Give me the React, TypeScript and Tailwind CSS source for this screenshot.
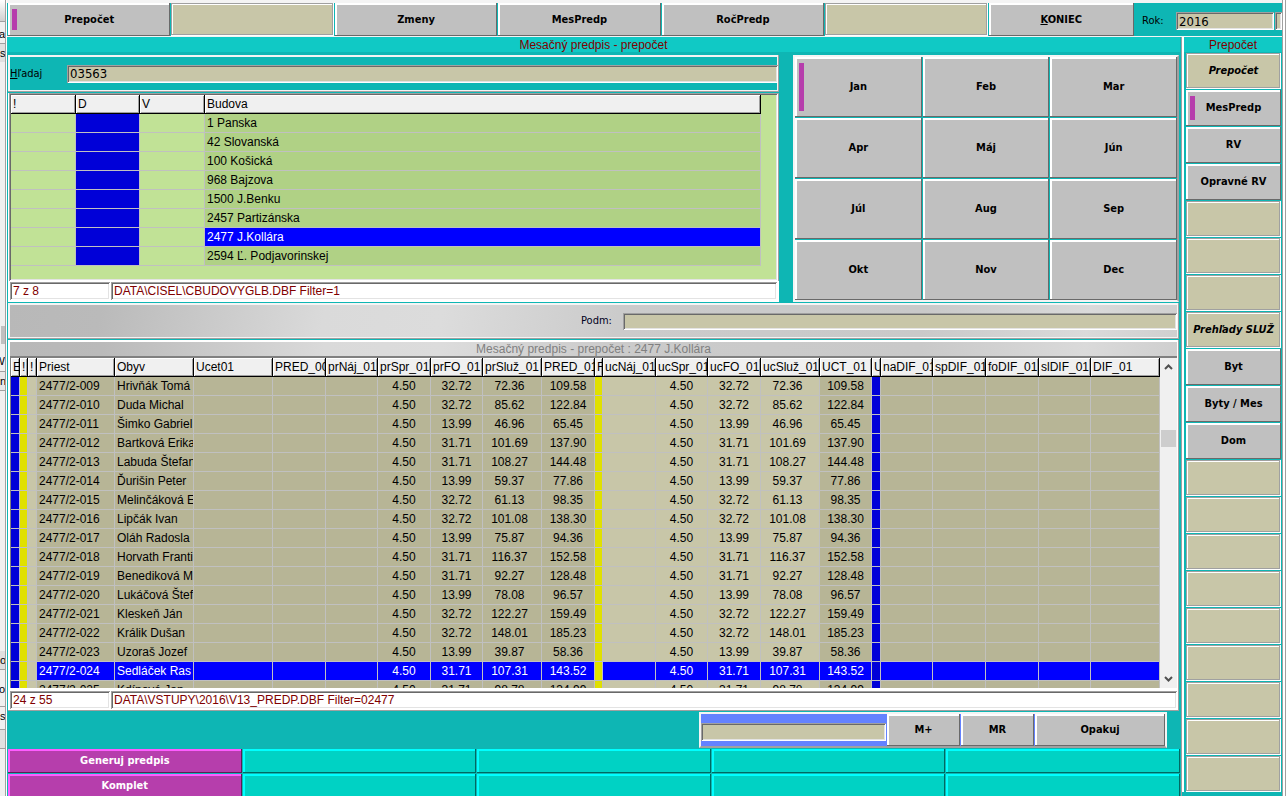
import React from "react";

const UI = "font-['DejaVu_Sans_Condensed','DejaVu_Sans',sans-serif]";
const RAISED = "bg-[#c0c0c0] shadow-[inset_-1px_-1px_0_#696969,inset_2px_2px_0_#fff]";
const ETCHED =
  "bg-[#c8c6a8] shadow-[inset_-1px_-1px_0_#fff,inset_-2px_-2px_0_#a0a0a0,inset_1px_1px_0_#a0a0a0,inset_2px_2px_0_#fff]";
const SUNKEN =
  "shadow-[inset_1px_1px_0_#a0a0a0,inset_-1px_-1px_0_#fff,inset_2px_2px_0_#696969,inset_-2px_-2px_0_#e3e3e3]";
const PANEL = "shadow-[inset_-1px_-1px_0_#a0a0a0,inset_2px_2px_0_#f4f4f4,inset_-2px_-2px_0_#f4f4f4]";
const SILVER =
  "bg-[linear-gradient(100deg,#b8b8b8_0%,#bababa_8%,#dadada_27%,#dcdcdc_37%,#cbcbcb_52%,#c9c9c9_78%,#dadada_92%,#cfcfcf_100%)]";

type ButtonProps = { label?: React.ReactNode; marked?: boolean; italic?: boolean; className?: string };

function Key({ label, marked, italic, className = "" }: ButtonProps) {
  const flat = !label || italic;
  return (
    <button
      type="button"
      disabled={flat}
      className={`relative min-w-0 text-center text-[11px] leading-4 font-bold whitespace-nowrap text-black ${UI} ${flat ? ETCHED : RAISED} ${italic ? "italic" : ""} ${className}`}
    >
      {marked && <span className="absolute top-[6px] bottom-[6px] left-[4px] w-[5px] bg-[#b63eac]" />}
      {label}
    </button>
  );
}

function Status({ position, source, className }: { position: string; source: string; className: string }) {
  return (
    <div className={`flex gap-px bg-white text-[12px] leading-[18px] text-[#800000] ${className}`}>
      <div className={`h-[18px] w-[100px] shrink-0 bg-white pl-[3px] ${SUNKEN}`}>{position}</div>
      <div className={`h-[18px] flex-1 bg-white pl-[3px] ${SUNKEN}`}>{source}</div>
    </div>
  );
}

const TH =
  "h-[19px] overflow-hidden border-r border-b border-black bg-[#f0f0f0] p-0 pl-[2px] text-left text-[12px] leading-[17px] font-normal whitespace-nowrap shadow-[inset_1px_1px_0_#fff,inset_-1px_-1px_0_#a0a0a0]";
const TD = "h-[19px] overflow-hidden border-r border-b border-[#c0c0c0] p-0 leading-[18px] whitespace-nowrap";

const buildings = [
  "1 Panska",
  "42 Slovanská",
  "100 Košická",
  "968 Bajzova",
  "1500 J.Benku",
  "2457 Partizánska",
  "2477 J.Kollára",
  "2594 Ľ. Podjavorinskej",
];

type Kind = "blue" | "yellow" | "light" | "dark";
type Column = { head: string; width: string; kind: Kind; field?: number; align?: string };

const columns: Column[] = [
  { head: "E", width: "w-[9px]", kind: "blue" },
  { head: "!", width: "w-[8px]", kind: "yellow" },
  { head: "!", width: "w-[9px]", kind: "light" },
  { head: "Priest", width: "w-[78px]", kind: "dark", field: 0, align: "pl-[2px]" },
  { head: "Obyv", width: "w-[79px]", kind: "dark", field: 1, align: "pl-[2px]" },
  { head: "Ucet01", width: "w-[79px]", kind: "dark" },
  { head: "PRED_00", width: "w-[53px]", kind: "dark" },
  { head: "prNáj_01", width: "w-[52px]", kind: "dark" },
  { head: "prSpr_01", width: "w-[53px]", kind: "dark", field: 2, align: "text-center" },
  { head: "prFO_01", width: "w-[52px]", kind: "dark", field: 3, align: "text-center" },
  { head: "prSluž_01", width: "w-[59px]", kind: "dark", field: 4, align: "text-center pr-[5px]" },
  { head: "PRED_01", width: "w-[53px]", kind: "dark", field: 5, align: "text-center" },
  { head: "F", width: "w-[8px]", kind: "yellow" },
  { head: "ucNáj_01", width: "w-[53px]", kind: "light" },
  { head: "ucSpr_01", width: "w-[52px]", kind: "light", field: 2, align: "text-center" },
  { head: "ucFO_01", width: "w-[53px]", kind: "light", field: 3, align: "text-center" },
  { head: "ucSluž_01", width: "w-[59px]", kind: "light", field: 4, align: "text-center pr-[5px]" },
  { head: "UCT_01", width: "w-[52px]", kind: "dark", field: 5, align: "text-center" },
  { head: "U", width: "w-[9px]", kind: "blue" },
  { head: "naDIF_01", width: "w-[52px]", kind: "dark" },
  { head: "spDIF_01", width: "w-[53px]", kind: "dark" },
  { head: "foDIF_01", width: "w-[53px]", kind: "dark" },
  { head: "slDIF_01", width: "w-[52px]", kind: "dark" },
  { head: "DIF_01", width: "", kind: "dark" },
];

const fills: Record<Kind, string> = {
  blue: "bg-[#0000d8]",
  yellow: "bg-[#e0e000]",
  light: "bg-[#c8c6a8]",
  dark: "bg-[#b7b596]",
};

const rows: string[][] = [
  ["2477/2-009", "Hrivňák Tomá", "4.50", "32.72", "72.36", "109.58"],
  ["2477/2-010", "Duda Michal", "4.50", "32.72", "85.62", "122.84"],
  ["2477/2-011", "Šimko Gabriel", "4.50", "13.99", "46.96", "65.45"],
  ["2477/2-012", "Bartková Erika", "4.50", "31.71", "101.69", "137.90"],
  ["2477/2-013", "Labuda Štefan", "4.50", "31.71", "108.27", "144.48"],
  ["2477/2-014", "Ďurišin Peter", "4.50", "13.99", "59.37", "77.86"],
  ["2477/2-015", "Melinčáková E", "4.50", "32.72", "61.13", "98.35"],
  ["2477/2-016", "Lipčák Ivan", "4.50", "32.72", "101.08", "138.30"],
  ["2477/2-017", "Oláh Radosla", "4.50", "13.99", "75.87", "94.36"],
  ["2477/2-018", "Horvath Franti", "4.50", "31.71", "116.37", "152.58"],
  ["2477/2-019", "Benediková M", "4.50", "31.71", "92.27", "128.48"],
  ["2477/2-020", "Lukáčová Štef", "4.50", "13.99", "78.08", "96.57"],
  ["2477/2-021", "Kleskeň Ján", "4.50", "32.72", "122.27", "159.49"],
  ["2477/2-022", "Králik Dušan", "4.50", "32.72", "148.01", "185.23"],
  ["2477/2-023", "Uzoraš Jozef", "4.50", "13.99", "39.87", "58.36"],
  ["2477/2-024", "Sedláček Ras", "4.50", "31.71", "107.31", "143.52"],
  ["2477/2-025", "Kdínová Jan", "4.50", "31.71", "98.78", "134.99"],
];
const selectedRow = 15;

const months = ["Jan", "Feb", "Mar", "Apr", "Máj", "Jún", "Júl", "Aug", "Sep", "Okt", "Nov", "Dec"];
const sideKeys = ["", "MesPredp", "RV", "Opravné RV", "", "", "", "", "Byt", "Byty / Mes", "Dom", "", "", "", "", "", "", "", "", ""];
const sideTitles: Record<number, string> = { 0: "Prepočet", 7: "Prehľady SLUŽ" };

function Backdrop() {
  return (
    <aside className="flex w-[6px] shrink-0 flex-col items-end overflow-hidden border-r border-[#a0a0a0] bg-[#f0f0f0] text-[11px] leading-[18px] text-black">
      <div className="h-[22px] w-full shrink-0 border-b border-[#a0a0a0] bg-linear-to-b from-white to-[#d0d0d0]" />
      <span className="mt-[3px]">Ca</span>
      <span className="w-full border-t border-[#a0a0a0] bg-[#e0e0e0]">s</span>
      <span className="mt-[264px] h-[18px] w-full border-r-4 border-[#c0c0c0]" />
      <span className="mt-[8px]">W</span>
      <span className="mt-px w-full border-y border-[#a0a0a0] bg-[#e8e8e8]">n</span>
      <span className="mt-[260px] w-full border-b border-[#a0a0a0] bg-[#e0e0e0]">o</span>
      <span className="mt-[10px]">o</span>
      <span className="mt-[8px] w-full border-t border-[#a0a0a0]">s</span>
      <span className="mt-[4px] h-[20px] w-full border-y border-[#a0a0a0] bg-[#e0e0e0]" />
    </aside>
  );
}

function SearchPanel() {
  return (
    <div className={`flex h-[37px] items-center bg-[#0eb6b4] pr-px pl-[2px] ${PANEL}`}>
      <label htmlFor="search" className={`w-[57px] text-[11px] leading-4 text-black ${UI}`}>
        <u>H</u>ľadaj
      </label>
      <input
        id="search"
        defaultValue="03563"
        className={`h-[18px] min-w-0 flex-1 bg-[#c8c6a8] pl-[3px] text-[13px] text-black ${UI} ${SUNKEN}`}
      />
    </div>
  );
}

function BuildingTable() {
  return (
    <div className="mt-px bg-white shadow-[inset_-1px_-1px_0_#a0a0a0]">
      <div className={`mx-px mt-px h-[188px] bg-[#c1e296] pt-[2px] pr-[2px] pl-[2px] ${SUNKEN}`}>
        <div className="pr-[15px]">
          <table className="w-full table-fixed border-separate border-spacing-0 text-[12px] text-black">
            <thead>
              <tr>
                <th className={`${TH} w-[65px]`}>!</th>
                <th className={`${TH} w-[64px]`}>D</th>
                <th className={`${TH} w-[65px]`}>V</th>
                <th className={TH}>Budova</th>
              </tr>
            </thead>
            <tbody>
              {buildings.map((name, i) => (
                <tr key={name}>
                  <td className={TD} />
                  <td className={`${TD} bg-[#0000d8]`} />
                  <td className={TD} />
                  <td className={`${TD} pl-[2px] ${i === 6 ? "bg-[#0000ff] text-white" : "bg-[#b0d185]"}`}>{name}</td>
                </tr>
              ))}
            </tbody>
          </table>
        </div>
      </div>
      <Status position="7 z 8" source="DATA\CISEL\CBUDOVYGLB.DBF Filter=1" className="px-[2px] pt-px pb-[2px]" />
    </div>
  );
}

function Scrollbar() {
  return (
    <div className="flex w-[17px] shrink-0 flex-col items-center bg-[#f0f0f0]">
      <button type="button" aria-label="Nahor" className="flex h-[18px] w-full items-center justify-center">
        <svg width="9" height="6" viewBox="0 0 9 6" fill="none" stroke="#505050" strokeWidth="2">
          <path d="M1 5 L4.500 1.500 L8 5" />
        </svg>
      </button>
      <div className="w-full flex-1 pt-[54px]">
        <div className="mx-px h-[17px] bg-[#cdcdcd]" />
      </div>
      <button type="button" aria-label="Nadol" className="flex h-[18px] w-full items-center justify-center">
        <svg width="9" height="6" viewBox="0 0 9 6" fill="none" stroke="#505050" strokeWidth="2">
          <path d="M1 1 L4.500 4.500 L8 1" />
        </svg>
      </button>
    </div>
  );
}

function PaymentTable() {
  return (
    <section className="mx-px mt-px bg-white p-[2px] shadow-[inset_-1px_-1px_0_#a0a0a0]">
      <h2 className={`h-[14px] text-center text-[12px] leading-[14px] text-[#808080] ${SILVER}`}>
        Mesačný predpis - prepočet : 2477 J.Kollára
      </h2>
      <div className="flex h-[332px] overflow-hidden border-t-2 border-l border-[#808080]">
        <div className="min-w-0 flex-1 overflow-hidden">
          <table className="w-full table-fixed border-separate border-spacing-0 text-[12px] text-black">
            <thead>
              <tr>
                {columns.map((c, i) => (
                  <th key={i} className={`${TH} ${c.width}`}>
                    {c.head}
                  </th>
                ))}
              </tr>
            </thead>
            <tbody>
              {rows.map((row, r) => (
                <tr key={row[0]}>
                  {columns.map((c, i) => (
                    <td
                      key={i}
                      className={`${TD} ${c.align ?? ""} ${
                        r === selectedRow && i > 2 && c.kind !== "yellow" && c.kind !== "blue"
                          ? "bg-[#0000ff] text-white"
                          : fills[c.kind]
                      }`}
                    >
                      {c.field === undefined ? null : row[c.field]}
                    </td>
                  ))}
                </tr>
              ))}
            </tbody>
          </table>
        </div>
        <Scrollbar />
      </div>
      <Status
        position="24 z 55"
        source="DATA\VSTUPY\2016\V13_PREDP.DBF Filter=02477"
        className="pt-[3px]"
      />
    </section>
  );
}

function Footer() {
  const base = "h-[24px] text-[11px] leading-4 font-bold text-white";
  const cells = [0, 1, 2, 3, 4];
  return (
    <div className="grid grid-cols-5 gap-px pl-px">
      {["Generuj predpis", "Komplet"].map((label) =>
        cells.map((c) =>
          c === 0 ? (
            <button
              key={label}
              type="button"
              className={`${base} ${UI} bg-[#b63eac] shadow-[inset_-1px_-1px_0_#5b1f56,inset_2px_2px_0_#ff5cff]`}
            >
              {label}
            </button>
          ) : (
            <button
              key={label + c}
              type="button"
              disabled
              className={`${base} bg-[#00d2c4] shadow-[inset_-1px_-1px_0_#006962,inset_2px_2px_0_#00ffff]`}
            />
          ),
        ),
      )}
    </div>
  );
}

export default function App() {
  return (
    <div className="flex h-screen overflow-hidden bg-[#f0f0f0] font-['Liberation_Sans',Arial,sans-serif]">
      <Backdrop />
      <div className="flex min-w-0 flex-1 flex-col border-l border-white bg-[#0eb6b4]">
        <header className="flex h-[37px] shrink-0 border-t-3 border-b border-[#f4f4f4]">
          <nav className="grid w-[1127px] shrink grid-cols-[repeat(6,minmax(0,163fr))_minmax(0,146fr)] gap-px pl-px">
            <Key label="Prepočet" marked />
            <Key />
            <Key label="Zmeny" />
            <Key label="MesPredp" />
            <Key label="RočPredp" />
            <Key />
            <Key label={<><u>K</u>ONIEC</>} />
          </nav>
          <div className="flex flex-1 items-center pt-[2px] pl-[8px]">
            <label htmlFor="year" className={`w-[34px] text-[11px] leading-4 text-black ${UI}`}>
              Rok:
            </label>
            <input
              id="year"
              defaultValue="2016"
              className={`h-[18px] w-[98px] min-w-0 bg-[#c8c6a8] pt-[2px] pl-[3px] text-[13px] text-black ${UI} ${SUNKEN}`}
            />
            <div className={`ml-px h-[18px] flex-1 bg-[#c8c6a8] ${SUNKEN}`} />
          </div>
        </header>

        <div className="flex min-h-0 flex-1">
          <main className="flex min-w-0 flex-1 flex-col">
            <h1 className="mb-[3px] h-[15px] shrink-0 bg-[#10c9c5] text-center text-[12px] leading-[17px] text-[#800000]">
              Mesačný predpis - prepočet
            </h1>
            <div className="flex gap-[14px] px-px">
              <section className="min-w-0 flex-1">
                <SearchPanel />
                <BuildingTable />
              </section>
              <section className="w-[386px] shrink-0 border-2 border-[#f4f4f4] border-r-[#a0a0a0]">
                <div className="grid h-full grid-cols-3 grid-rows-4 gap-px">
                  {months.map((m, i) => (
                    <Key key={m} label={m} marked={i === 0} />
                  ))}
                </div>
              </section>
            </div>

            <section className={`mx-px mt-px flex h-[36px] shrink-0 items-center pr-[2px] ${SILVER} ${PANEL}`}>
              <label htmlFor="condition" className={`ml-auto w-[42px] text-[11px] leading-4 text-[#000020] ${UI}`}>
                Podm:
              </label>
              <input id="condition" className={`h-[17px] w-[554px] bg-[#c8c6a8] pl-[3px] text-[12px] ${SUNKEN}`} />
            </section>

            <PaymentTable />

            <div className="flex h-[38px] shrink-0 items-start justify-end pt-px pr-[13px]">
              <div className="flex h-[36px] w-[468px] gap-px border-2 border-[#f4f4f4] border-b-[#a0a0a0] bg-[#6482ff]">
                <div className="flex flex-1 items-center pt-[3px]">
                  <input aria-label="Pamäť" className={`h-[18px] w-full bg-[#c8c6a8] ${SUNKEN}`} />
                </div>
                <Key label="M+" className="w-[73px]" />
                <Key label="MR" className="w-[73px]" />
                <Key label="Opakuj" className="w-[130px]" />
              </div>
            </div>

            <Footer />
          </main>

          <aside className="ml-px flex w-[101px] shrink-0 flex-col border-l border-[#a0a0a0] bg-[#0eb6b4]">
            <div className="border-l-2 border-white">
              <h2 className="mb-px h-[15px] bg-[#10c9c5] text-center text-[12px] leading-[17px] text-[#800000]">Prepočet</h2>
              <div className="flex flex-col gap-px pr-px pl-[2px]">
                {sideKeys.map((label, i) => (
                  <Key
                    key={i}
                    label={sideTitles[i] ?? label}
                    italic={i in sideTitles}
                    marked={i === 1}
                    className="h-[36px]"
                  />
                ))}
              </div>
            </div>
          </aside>
        </div>
      </div>
      <div className="w-[4px] shrink-0 border-x border-[#a0a0a0] bg-white" />
    </div>
  );
}
